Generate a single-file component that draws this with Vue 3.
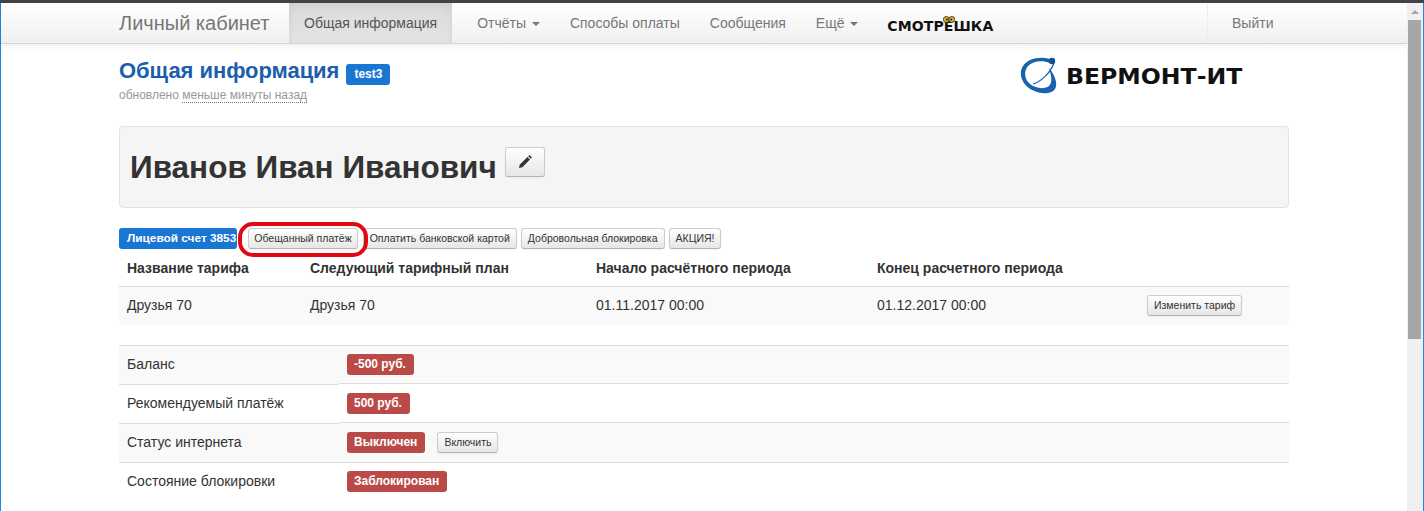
<script setup>
const rows = [
  { label: 'Баланс', badge: '-500 руб.' },
  { label: 'Рекомендуемый платёж', badge: '500 руб.' },
  { label: 'Статус интернета', badge: 'Выключен', action: 'Включить', },
  { label: 'Состояние блокировки', badge: 'Заблокирован' },
]
const actions = ['Обещанный платёж', 'Оплатить банковской картой', 'Добровольная блокировка', 'АКЦИЯ!']
</script>

<template>
  <div class="window">
    <div class="topline"></div>
    <div class="frame">
      <div class="main">
        <nav class="navbar">
          <div class="nav-inner">
            <a class="brand">Личный кабинет</a>
            <a class="nav-item active">Общая информация</a>
            <a class="nav-item first">Отчёты <i class="caret"></i></a>
            <a class="nav-item">Способы оплаты</a>
            <a class="nav-item">Сообщения</a>
            <a class="nav-item">Ещё <i class="caret"></i></a>
            <span class="smotr">СМОТР<span class="smotr-e">Ё<svg class="eyes" width="12" height="7" viewBox="0 0 12 7"><circle cx="3.300" cy="3.500" r="3" fill="#e5b32a" stroke="#222" stroke-width=".8"/><circle cx="8.700" cy="3.500" r="3" fill="#e5b32a" stroke="#222" stroke-width=".8"/><circle cx="3.800" cy="3.500" r="1" fill="#222"/><circle cx="8.200" cy="3.500" r="1" fill="#222"/></svg></span>ШКА</span>
            <a class="nav-item logout">Выйти</a>
          </div>
        </nav>

        <div class="container">
          <header class="page-head">
            <div>
              <h2 class="title">Общая информация <span class="label blue">test3</span></h2>
              <div class="updated">обновлено <span class="dotted">меньше минуты назад</span></div>
            </div>
            <div class="logo">
              <svg width="37" height="37" viewBox="0 0 37 37">
                <path d="M30 2C20 -1 8 1 3 9C-2 17 2 28 12 33C20 37 31 38 35 32C38 27 35 18 29 11C31 18 33 25 29 29C24 33 14 31 9 26C4 21 4 14 8 9C13 4 22 3 30 6Z" fill="#1b62ad"/>
                <path d="M13 27C20 25 30 17 34 6" fill="none" stroke="#1b62ad" stroke-width="1.300"/>
                <circle cx="32" cy="4" r="3.200" fill="#164f90"/>
              </svg>
              <span class="logo-text">ВЕРМОНТ-ИТ</span>
            </div>
          </header>

          <section class="jumbo">
            <h1 class="person">Иванов Иван Иванович</h1>
            <button class="btn edit" aria-label="Редактировать">
              <svg width="14" height="14" viewBox="0 0 14 14"><path d="M1 13l.7-3.300L9.400 2 12 4.600l-7.700 7.700zM10.200 1.200l.8-.7c.4-.3.8-.3 1.100 0l1.400 1.400c.3.300.3.700 0 1.100l-.7.800z" fill="#333"/></svg>
            </button>
          </section>

          <div class="account-bar">
            <span class="label blue account">Лицевой счет 3853</span>
            <button v-for="a in actions" :key="a" class="btn small">{{ a }}</button>
            <svg class="highlight" width="130" height="35" viewBox="0 0 130 35"><rect x="2" y="2" width="126" height="31" rx="13" fill="none" stroke="#e30613" stroke-width="4"/></svg>
          </div>

          <div class="tariff">
            <div class="t-row t-head">
              <span>Название тарифа</span>
              <span>Следующий тарифный план</span>
              <span>Начало расчётного периода</span>
              <span>Конец расчетного периода</span>
              <span></span>
            </div>
            <div class="t-row t-body">
              <span>Друзья 70</span>
              <span>Друзья 70</span>
              <span>01.11.2017 00:00</span>
              <span>01.12.2017 00:00</span>
              <span><button class="btn small">Изменить тариф</button></span>
            </div>
          </div>

          <div class="status">
            <div v-for="(r, i) in rows" :key="r.label" class="s-row" :class="{ odd: i % 2 === 0, raised: i === 1 || i === 2 }">
              <div class="s-label">{{ r.label }}</div>
              <div class="s-value">
                <span class="label red">{{ r.badge }}</span>
                <button v-if="r.action" class="btn small">{{ r.action }}</button>
              </div>
            </div>
          </div>
        </div>
      </div>
      <aside class="scrollbar">
        <i class="arrow"></i>
        <div class="thumb"></div>
      </aside>
    </div>
  </div>
</template>

<style>
html, body { margin: 0; overflow: hidden; background: #fff; }
</style>

<style scoped>
.window {
  height: 511px;
  overflow: hidden;
  display: flex;
  flex-direction: column;
  font-family: "Liberation Sans", Arial, sans-serif;
  font-size: 14px;
  color: #333;
}
.topline { height: 3px; background: #444; flex: none; }
.frame {
  flex: 1;
  min-height: 0;
  display: flex;
  border-left: 1px solid #1e88e5;
  border-right: 1px solid #1e88e5;
}
.main { width: 1406px; flex: none; }
.navbar {
  height: 40px;
  border-bottom: 1px solid #d5d5d5;
  background: linear-gradient(to bottom, #fff, #f0f0f0);
  box-shadow: 0 2px 6px rgba(0, 0, 0, .07);
}
.nav-inner {
  width: 1170px;
  margin: 0 auto;
  height: 40px;
  display: flex;
  align-items: stretch;
}
.brand {
  font-size: 20px;
  line-height: 40px;
  color: #777;
  width: 170px;
  flex: none;
}
.nav-item {
  padding: 0 15px;
  line-height: 40px;
  color: #777;
  white-space: nowrap;
}
.nav-item.first { margin-left: 10px; }
.nav-item.active {
  background: linear-gradient(to bottom, #dbdbdb, #e4e4e4);
  box-shadow: inset 0 3px 8px rgba(0, 0, 0, .07);
  color: #555;
}
.caret {
  display: inline-block;
  width: 0;
  height: 0;
  margin-left: 2px;
  vertical-align: middle;
  border-top: 4px solid #777;
  border-left: 4px solid transparent;
  border-right: 4px solid transparent;
}
.smotr {
  margin-left: 14px;
  font-family: "DejaVu Sans", sans-serif;
  font-weight: 700;
  font-size: 14px;
  line-height: 46px;
  letter-spacing: .1px;
  color: #111;
  white-space: nowrap;
}
.smotr-e { position: relative; }
.eyes { position: absolute; left: -1px; top: -2px; }
.logout {
  margin-left: auto;
  border-left: 1px solid #eee;
  padding: 0 15px 0 24px;
  margin-right: -1px;
  width: 83px;
  box-sizing: border-box;
}
.container { width: 1170px; margin: 0 auto; }
.page-head {
  display: flex;
  justify-content: space-between;
  height: 82px;
  box-sizing: border-box;
  padding-top: 14px;
}
.title {
  margin: 0;
  font-size: 22px;
  line-height: 25px;
  font-weight: 700;
  letter-spacing: -.05px;
  color: #1b5ead;
}
.updated { margin-top: 3px; font-size: 12px; line-height: 14px; color: #999; }
.dotted { border-bottom: 1px dotted #777; }
.label {
  display: inline-block;
  border-radius: 3px;
  color: #fff;
  font-weight: 700;
  font-size: 12px;
  line-height: 14px;
  padding: 3px 8px 4px 7px;
}
.label.blue { background: #1976d2; }
.label.red { background: #b94a48; }
.title .label { padding: 3px 8px 4px; margin-left: 1px; letter-spacing: 0; vertical-align: 0; }
.logo { display: flex; align-items: center; gap: 9px; height: 37px; margin: -1px 46px 0 0; }
.logo-text {
  font-family: "DejaVu Sans", sans-serif;
  font-weight: 700;
  font-size: 20.500px;
  transform: scaleX(1.150);
  transform-origin: left center;
  width: 177px;
  padding-top: 2px;
  color: #111;
  white-space: nowrap;
}
.jumbo {
  height: 80px;
  border: 1px solid #e3e3e3;
  border-radius: 4px;
  background: #f5f5f5;
  padding-left: 10px;
  display: flex;
  align-items: flex-start;
  gap: 8px;
}
.person {
  margin: 21px 0 0;
  font-size: 31.500px;
  line-height: 38px;
  font-weight: 700;
}
.btn {
  font-family: inherit;
  color: #333;
  border: 1px solid #ccc;
  border-bottom-color: #b3b3b3;
  border-radius: 3px;
  background: linear-gradient(to bottom, #fff, #e6e6e6);
  box-shadow: inset 0 1px 0 rgba(255, 255, 255, .2), 0 1px 2px rgba(0, 0, 0, .05);
  cursor: pointer;
}
.edit {
  width: 40px;
  height: 30px;
  margin-top: 20px;
  padding: 0;
  display: flex;
  align-items: center;
  justify-content: center;
}
.small { font-size: 10.500px; line-height: 14px; padding: 2px 6px 3px; height: 21px; white-space: nowrap; }
.account-bar {
  position: relative;
  display: flex;
  align-items: center;
  gap: 4px;
  margin-top: 20px;
  height: 21px;
}
.account { font-size: 11.844px; padding: 3px 1px 4px 8px; }
.account-bar .btn:first-of-type { margin-left: 7px; margin-right: 1px; padding: 2px 5px 3px; }
.highlight { position: absolute; left: 119px; top: -6px; pointer-events: none; }
.tariff { margin-top: 1px; }
.t-row {
  display: grid;
  grid-template-columns: 183px 286px 281px 270px 1fr;
  padding-left: 8px;
  box-sizing: border-box;
}
.t-head {
  height: 37px;
  line-height: 36px;
  font-weight: 700;
  border-bottom: 1px solid #ddd;
}
.t-body { height: 38px; padding-bottom: 2px; align-items: center; background: #f9f9f9; }
.status { margin-top: 20px; }
.s-row { display: flex; height: 39px; }
.s-label, .s-value { box-sizing: border-box; border-top: 1px solid #ddd; height: 39px; }
.odd .s-label, .odd .s-value { background: #f9f9f9; }
.s-label { width: 220px; flex: none; padding: 8px 8px 0; line-height: 20px; }
.s-value { flex: 1; display: flex; align-items: flex-start; gap: 12px; padding: 8px 0 0 8px; }
.raised .s-value { margin-top: -1px; height: 40px; padding-top: 9px; }
.s-row:not(.odd) .s-value { background: #fff; }
.scrollbar { width: 16px; background: #f0f0f0; position: relative; flex: none; }
.arrow {
  position: absolute;
  left: 4px;
  top: 7px;
  border-bottom: 4px solid #a6a6a6;
  border-left: 4px solid transparent;
  border-right: 4px solid transparent;
}
.thumb { position: absolute; left: 1px; width: 13px; top: 17px; height: 319px; background: #a6a6a6; }
</style>
